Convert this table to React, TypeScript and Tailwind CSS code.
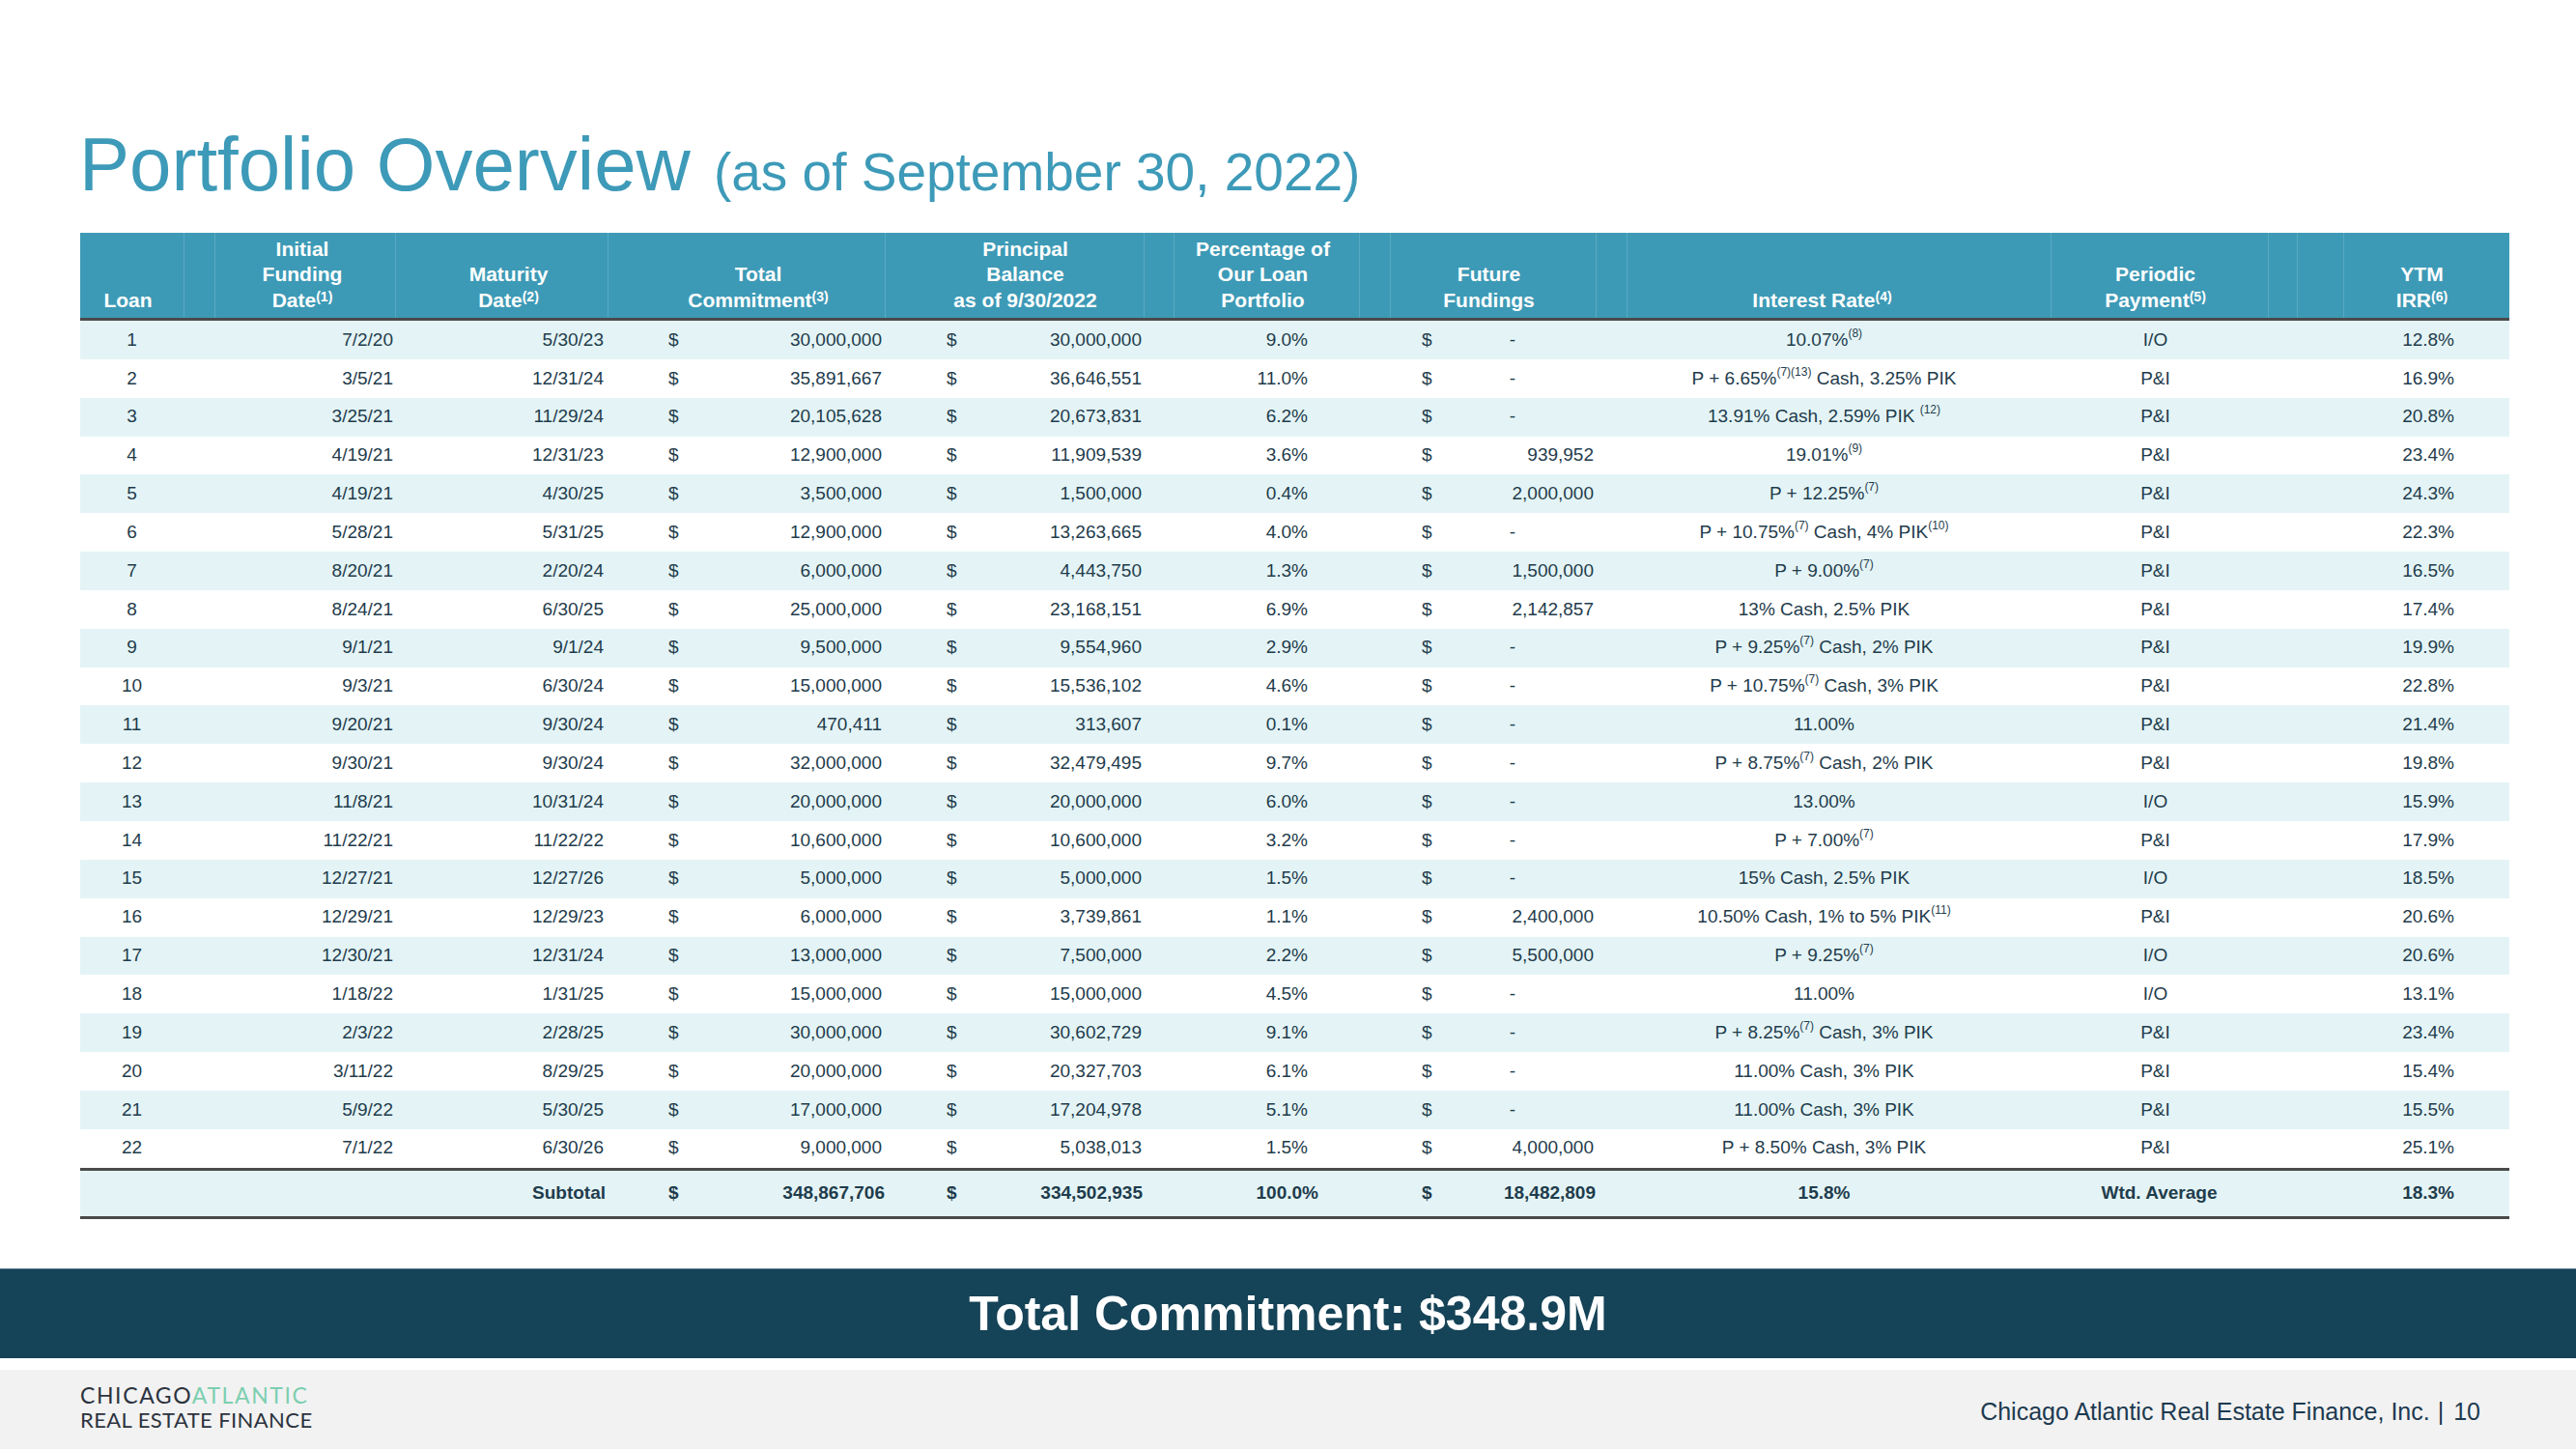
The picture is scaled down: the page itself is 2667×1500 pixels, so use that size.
import React from "react";

type Row = {
  loan: number;
  funded: string;
  maturity: string;
  commitment: string;
  principal: string;
  pct: string;
  future: string;
  rate: string;
  payment: string;
  irr: string;
};

// rate strings mark superscripts with {...}
const rows: Row[] = [
  { loan: 1, funded: "7/2/20", maturity: "5/30/23", commitment: "30,000,000", principal: "30,000,000", pct: "9.0%", future: "-", rate: "10.07%{(8)}", payment: "I/O", irr: "12.8%" },
  { loan: 2, funded: "3/5/21", maturity: "12/31/24", commitment: "35,891,667", principal: "36,646,551", pct: "11.0%", future: "-", rate: "P + 6.65%{(7)(13)} Cash, 3.25% PIK", payment: "P&I", irr: "16.9%" },
  { loan: 3, funded: "3/25/21", maturity: "11/29/24", commitment: "20,105,628", principal: "20,673,831", pct: "6.2%", future: "-", rate: "13.91% Cash, 2.59% PIK {(12)}", payment: "P&I", irr: "20.8%" },
  { loan: 4, funded: "4/19/21", maturity: "12/31/23", commitment: "12,900,000", principal: "11,909,539", pct: "3.6%", future: "939,952", rate: "19.01%{(9)}", payment: "P&I", irr: "23.4%" },
  { loan: 5, funded: "4/19/21", maturity: "4/30/25", commitment: "3,500,000", principal: "1,500,000", pct: "0.4%", future: "2,000,000", rate: "P + 12.25%{(7)}", payment: "P&I", irr: "24.3%" },
  { loan: 6, funded: "5/28/21", maturity: "5/31/25", commitment: "12,900,000", principal: "13,263,665", pct: "4.0%", future: "-", rate: "P + 10.75%{(7)} Cash, 4% PIK{(10)}", payment: "P&I", irr: "22.3%" },
  { loan: 7, funded: "8/20/21", maturity: "2/20/24", commitment: "6,000,000", principal: "4,443,750", pct: "1.3%", future: "1,500,000", rate: "P + 9.00%{(7)}", payment: "P&I", irr: "16.5%" },
  { loan: 8, funded: "8/24/21", maturity: "6/30/25", commitment: "25,000,000", principal: "23,168,151", pct: "6.9%", future: "2,142,857", rate: "13% Cash, 2.5% PIK", payment: "P&I", irr: "17.4%" },
  { loan: 9, funded: "9/1/21", maturity: "9/1/24", commitment: "9,500,000", principal: "9,554,960", pct: "2.9%", future: "-", rate: "P + 9.25%{(7)} Cash, 2% PIK", payment: "P&I", irr: "19.9%" },
  { loan: 10, funded: "9/3/21", maturity: "6/30/24", commitment: "15,000,000", principal: "15,536,102", pct: "4.6%", future: "-", rate: "P + 10.75%{(7)} Cash, 3% PIK", payment: "P&I", irr: "22.8%" },
  { loan: 11, funded: "9/20/21", maturity: "9/30/24", commitment: "470,411", principal: "313,607", pct: "0.1%", future: "-", rate: "11.00%", payment: "P&I", irr: "21.4%" },
  { loan: 12, funded: "9/30/21", maturity: "9/30/24", commitment: "32,000,000", principal: "32,479,495", pct: "9.7%", future: "-", rate: "P + 8.75%{(7)} Cash, 2% PIK", payment: "P&I", irr: "19.8%" },
  { loan: 13, funded: "11/8/21", maturity: "10/31/24", commitment: "20,000,000", principal: "20,000,000", pct: "6.0%", future: "-", rate: "13.00%", payment: "I/O", irr: "15.9%" },
  { loan: 14, funded: "11/22/21", maturity: "11/22/22", commitment: "10,600,000", principal: "10,600,000", pct: "3.2%", future: "-", rate: "P + 7.00%{(7)}", payment: "P&I", irr: "17.9%" },
  { loan: 15, funded: "12/27/21", maturity: "12/27/26", commitment: "5,000,000", principal: "5,000,000", pct: "1.5%", future: "-", rate: "15% Cash, 2.5% PIK", payment: "I/O", irr: "18.5%" },
  { loan: 16, funded: "12/29/21", maturity: "12/29/23", commitment: "6,000,000", principal: "3,739,861", pct: "1.1%", future: "2,400,000", rate: "10.50% Cash, 1% to 5% PIK{(11)}", payment: "P&I", irr: "20.6%" },
  { loan: 17, funded: "12/30/21", maturity: "12/31/24", commitment: "13,000,000", principal: "7,500,000", pct: "2.2%", future: "5,500,000", rate: "P + 9.25%{(7)}", payment: "I/O", irr: "20.6%" },
  { loan: 18, funded: "1/18/22", maturity: "1/31/25", commitment: "15,000,000", principal: "15,000,000", pct: "4.5%", future: "-", rate: "11.00%", payment: "I/O", irr: "13.1%" },
  { loan: 19, funded: "2/3/22", maturity: "2/28/25", commitment: "30,000,000", principal: "30,602,729", pct: "9.1%", future: "-", rate: "P + 8.25%{(7)} Cash, 3% PIK", payment: "P&I", irr: "23.4%" },
  { loan: 20, funded: "3/11/22", maturity: "8/29/25", commitment: "20,000,000", principal: "20,327,703", pct: "6.1%", future: "-", rate: "11.00% Cash, 3% PIK", payment: "P&I", irr: "15.4%" },
  { loan: 21, funded: "5/9/22", maturity: "5/30/25", commitment: "17,000,000", principal: "17,204,978", pct: "5.1%", future: "-", rate: "11.00% Cash, 3% PIK", payment: "P&I", irr: "15.5%" },
  { loan: 22, funded: "7/1/22", maturity: "6/30/26", commitment: "9,000,000", principal: "5,038,013", pct: "1.5%", future: "4,000,000", rate: "P + 8.50% Cash, 3% PIK", payment: "P&I", irr: "25.1%" },
];

const cols =
  "grid grid-cols-[107px_32px_187px_220px_287px_268px_31px_192px_32px_213px_32px_439px_225px_30px_48px_172px]";

function Rate({ text }: { text: string }) {
  const parts = text.split(/\{([^}]*)\}/);
  return (
    <>
      {parts.map((p, i) =>
        i % 2 === 1 ? (
          <sup key={i} className="text-[12px] top-[-9px]">
            {p}
          </sup>
        ) : (
          <span key={i}>{p}</span>
        ),
      )}
    </>
  );
}

function HeadSup({ children }: { children: React.ReactNode }) {
  return <sup className="text-[14px] top-[-6px] font-semibold">{children}</sup>;
}

function Head({ className = "", children }: { className?: string; children?: React.ReactNode }) {
  return (
    <div className={`flex flex-col justify-end items-center text-center pb-[5px] border-l border-[#58a9c2] first:border-l-0 ${className}`}>
      {children}
    </div>
  );
}

export default function App() {
  return (
    <div className="w-[2667px] h-[1500px] bg-white flex flex-col font-['Liberation_Sans',Arial,sans-serif] text-[#1f3c4c]">
      <h1 className="pt-[131px] pl-[82px] h-[209px] leading-[78px] text-[#3d9ab8] whitespace-nowrap">
        <span className="text-[78px]">Portfolio Overview</span>
        <span className="text-[55px] ml-[24px]">(as of September 30, 2022)</span>
      </h1>

      <div className="mt-[32px] ml-[83px] w-[2515px]">
        <div className={`${cols} h-[91px] bg-[#3d9ab6] border-b-[3px] border-[#4a4a4a] text-white font-bold text-[21px] leading-[26.3px]`}>
          <Head className="pr-[8px]">Loan</Head>
          <Head />
          <Head className="pr-[6px]">
            <span>Initial</span>
            <span>Funding</span>
            <span>Date<HeadSup>(1)</HeadSup></span>
          </Head>
          <Head className="pl-[14px]">
            <span>Maturity</span>
            <span>Date<HeadSup>(2)</HeadSup></span>
          </Head>
          <Head className="pl-[24px]">
            <span>Total</span>
            <span>Commitment<HeadSup>(3)</HeadSup></span>
          </Head>
          <Head className="pl-[22px]">
            <span>Principal</span>
            <span>Balance</span>
            <span>as of 9/30/2022</span>
          </Head>
          <Head />
          <Head className="pr-[8px]">
            <span>Percentage of</span>
            <span>Our Loan</span>
            <span>Portfolio</span>
          </Head>
          <Head />
          <Head className="pr-[9px]">
            <span>Future</span>
            <span>Fundings</span>
          </Head>
          <Head />
          <Head className="pr-[35px]">
            <span>Interest Rate<HeadSup>(4)</HeadSup></span>
          </Head>
          <Head className="pr-[9px]">
            <span>Periodic</span>
            <span>Payment<HeadSup>(5)</HeadSup></span>
          </Head>
          <Head />
          <Head />
          <Head className="pr-[10px]">
            <span>YTM</span>
            <span>IRR<HeadSup>(6)</HeadSup></span>
          </Head>
        </div>

        {rows.map((r, i) => (
          <div
            key={r.loan}
            className={`${cols} h-[39.85px] items-center text-[19px] whitespace-nowrap ${i % 2 === 0 ? "bg-[#e4f4f6]" : "bg-white"}`}
          >
            <div className="text-center">{r.loan}</div>
            <div />
            <div className="text-right pr-[2px]">{r.funded}</div>
            <div className="text-right pr-[4px]">{r.maturity}</div>
            <div className="flex justify-between pl-[63px] pr-[3px]">
              <span>$</span>
              <span>{r.commitment}</span>
            </div>
            <div className="flex justify-between pl-[64px] pr-[2px]">
              <span>$</span>
              <span>{r.principal}</span>
            </div>
            <div />
            <div className="text-right pr-[53px]">{r.pct}</div>
            <div />
            <div className="flex justify-between pl-[33px] pr-[2px]">
              <span>$</span>
              {r.future === "-" ? <span className="pr-[81px]">-</span> : <span>{r.future}</span>}
            </div>
            <div className="col-span-2 text-center pl-[2px]">
              <Rate text={r.rate} />
            </div>
            <div className="text-center pr-[8px]">{r.payment}</div>
            <div className="col-span-2" />
            <div className="text-right pr-[57px]">{r.irr}</div>
          </div>
        ))}

        <div className={`${cols} h-[53px] items-center bg-[#e4f4f6] border-y-[3px] border-[#4a4a4a] text-[19px] font-bold whitespace-nowrap`}>
          <div className="col-span-3" />
          <div className="text-right pr-[2px]">Subtotal</div>
          <div className="flex justify-between pl-[63px] pr-[0px]">
            <span>$</span>
            <span>348,867,706</span>
          </div>
          <div className="flex justify-between pl-[64px] pr-[1px]">
            <span>$</span>
            <span>334,502,935</span>
          </div>
          <div />
          <div className="text-right pr-[42px]">100.0%</div>
          <div />
          <div className="flex justify-between pl-[33px] pr-[0px]">
            <span>$</span>
            <span>18,482,809</span>
          </div>
          <div className="col-span-2 text-center pl-[2px]">15.8%</div>
          <div className="text-center">Wtd. Average</div>
          <div className="col-span-2" />
          <div className="text-right pr-[57px]">18.3%</div>
        </div>
      </div>

      <div className="mt-[51px] h-[93px] bg-[#154357] border-t border-[#5e7b88] flex items-center justify-center">
        <span className="text-white font-bold text-[50px] leading-none">Total Commitment: $348.9M</span>
      </div>

      <div className="mt-[12px] flex-1 bg-[#f2f2f2] flex justify-between">
        <div className="pt-[13px] pl-[83px] font-['Lato',sans-serif] text-[#2c323e] leading-[26px] whitespace-nowrap">
          <div className="text-[23px] tracking-[1.6px]">
            <span>CHICAGO</span>
            <span className="text-[#7ccfb0]">ATLANTIC</span>
          </div>
          <div className="text-[22px] tracking-[0.4px]">REAL ESTATE FINANCE</div>
        </div>
        <div className="pt-[31px] pr-[99px] text-[25px] leading-none text-[#1d3a50] whitespace-nowrap">
          <span>Chicago Atlantic Real Estate Finance, Inc.</span>
          <span className="ml-[8px] mr-[10px]">|</span>
          <span>10</span>
        </div>
      </div>
    </div>
  );
}
